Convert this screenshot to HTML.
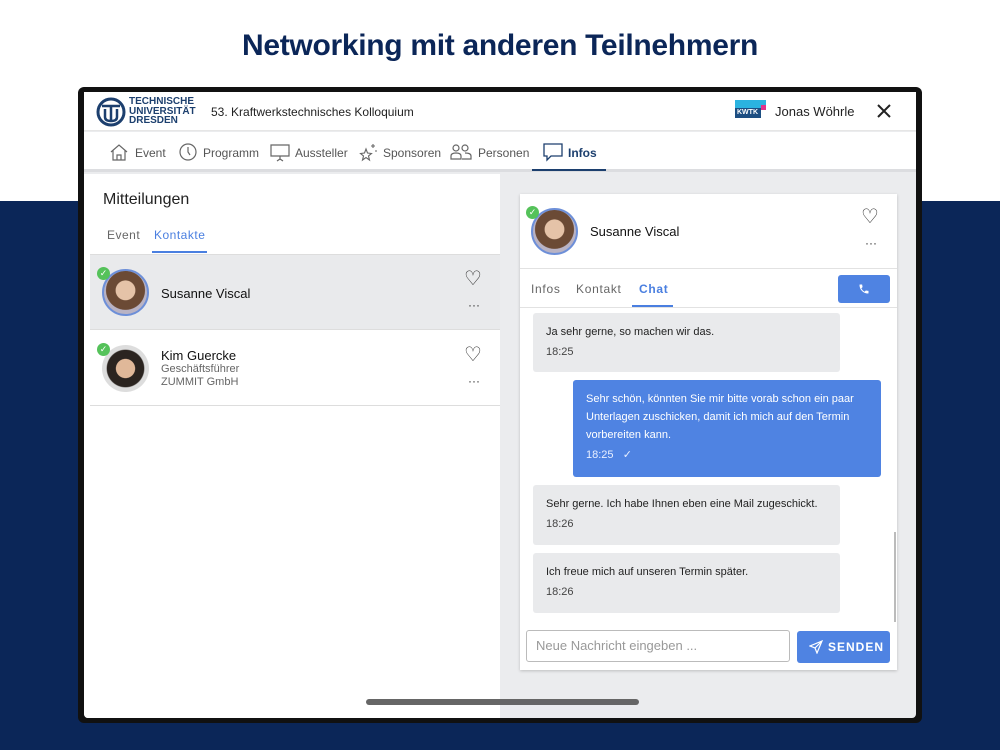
<!DOCTYPE html>
<html><head><meta charset="utf-8"><style>
*{margin:0;padding:0;box-sizing:border-box}
body{width:1000px;height:750px;overflow:hidden;position:relative;background:#fff;font-family:"Liberation Sans",sans-serif}
.a{position:absolute}
.navy{left:0;top:201px;width:1000px;height:549px;background:#0b2658}
h1{position:absolute;left:0;width:1000px;top:29px;text-align:center;font-size:30px;font-weight:bold;color:#0b2658;letter-spacing:-0.3px}
.frame{left:78px;top:87px;width:844px;height:636px;background:#111;border-radius:6px}
.scr{left:84px;top:92px;width:832px;height:626px;background:#ebecee;overflow:hidden;border-radius:0 0 4px 4px}
.bub{background:#e9eaec;border-radius:3px;font-size:11px;color:#222;line-height:18px;padding:10px 13px}
.bub .t{color:#444;margin-top:2px}
</style></head><body>
<h1>Networking mit anderen Teilnehmern</h1>
<div class="a navy"></div>
<div class="a frame"></div>
<div class="a scr">
 <div class="a" style="left:0;top:0;width:832px;height:39px;background:#fff;border-bottom:1px solid #e6e6e6"></div>
 <svg class="a" style="left:12px;top:5px" width="30" height="30" viewBox="0 0 30 30"><circle cx="15" cy="15" r="13" fill="none" stroke="#1c3f6e" stroke-width="3"/><path d="M6 9h18M15 9v16M9 12v8q0 4 6 4q6 0 6-4v-8" fill="none" stroke="#1c3f6e" stroke-width="2.5"/></svg>
 <div class="a" style="left:45px;top:5px;font-size:10px;font-weight:bold;color:#1c3f6e;line-height:9.5px">TECHNISCHE<br>UNIVERSITÄT<br>DRESDEN</div>
 <div class="a" style="left:127px;top:13px;font-size:12px;color:#222">53. Kraftwerkstechnisches Kolloquium</div>
 <div class="a" style="left:651px;top:8px;width:31px;height:22px;background:#fff">
  <div class="a" style="left:0;top:0;width:31px;height:8px;background:#2bb3e0"></div>
  <div class="a" style="left:0;top:8px;width:26px;height:10px;background:#1d4e82;color:#fff;font-size:7px;font-weight:bold;line-height:10px;padding-left:2px">KWTK</div>
  <div class="a" style="left:26px;top:5px;width:5px;height:5px;background:#e0338a"></div>
 </div>
 <div class="a" style="left:691px;top:12px;font-size:13px;color:#222">Jonas Wöhrle</div>
 <svg class="a" style="left:793px;top:12px" width="14" height="14" viewBox="0 0 14 14" stroke="#222" stroke-width="2"><path d="M1 1l12 12M13 1L1 13"/></svg>
 <div class="a" style="left:0;top:40px;width:832px;height:40px;background:#fff;border-bottom:3px solid #dcdde0"></div>
 <svg class="a" style="left:25px;top:51px" width="20" height="18" viewBox="0 0 20 18" fill="none" stroke="#666" stroke-width="1.2"><path d="M2 9L10 2l8 7M4 7v10h12V7M8 17v-5h4v5"/></svg>
 <div class="a" style="left:51px;top:54px;font-size:12px;color:#555">Event</div>
 <svg class="a" style="left:95px;top:51px" width="18" height="18" viewBox="0 0 18 18" fill="none" stroke="#666" stroke-width="1.2"><circle cx="9" cy="9" r="8"/><path d="M9 4v5l2 3"/></svg>
 <div class="a" style="left:119px;top:54px;font-size:12px;color:#555">Programm</div>
 <svg class="a" style="left:186px;top:51px" width="20" height="20" viewBox="0 0 20 20" fill="none" stroke="#666" stroke-width="1.2"><path d="M1 2h18v11H1zM10 13v3M7 18l3-2 3 2"/></svg>
 <div class="a" style="left:211px;top:54px;font-size:12px;color:#555">Aussteller</div>
 <svg class="a" style="left:274px;top:50px" width="20" height="20" viewBox="0 0 20 20" fill="none" stroke="#666" stroke-width="1.1"><path d="M8 7l1.5 4 4 .5-3 2.5 1 4-3.5-2.5L4.5 18l1-4-3-2.5 4-.5z"/><path d="M15 2v4M13 4h4M17 9h2"/></svg>
 <div class="a" style="left:299px;top:54px;font-size:12px;color:#555">Sponsoren</div>
 <svg class="a" style="left:366px;top:52px" width="22" height="16" viewBox="0 0 22 16" fill="none" stroke="#666" stroke-width="1.2"><circle cx="6" cy="4" r="3"/><circle cx="15" cy="4" r="3"/><path d="M1 15v-3q0-3 5-3t5 3v3zM12 15h9v-3q0-3-6-3"/></svg>
 <div class="a" style="left:394px;top:54px;font-size:12px;color:#555">Personen</div>
 <svg class="a" style="left:459px;top:51px" width="20" height="19" viewBox="0 0 20 19" fill="none" stroke="#1c3f6e" stroke-width="1.3"><path d="M1 1h18v12H8l-4 4v-4H1z"/></svg>
 <div class="a" style="left:484px;top:54px;font-size:12px;color:#1c3f6e;font-weight:bold">Infos</div>
 <div class="a" style="left:448px;top:77px;width:74px;height:2px;background:#1c3f6e"></div>
 <div class="a" style="left:0;top:82px;width:416px;height:544px;background:#fff"></div>
 <div class="a" style="left:19px;top:99px;font-size:16px;color:#222">Mitteilungen</div>
 <div class="a" style="left:23px;top:136px;font-size:12px;color:#666;letter-spacing:.5px">Event</div>
 <div class="a" style="left:70px;top:136px;font-size:12px;color:#4a7fe0;letter-spacing:.5px">Kontakte</div>
 <div class="a" style="left:68px;top:159px;width:55px;height:2px;background:#4a7fe0"></div>
 <div class="a" style="left:6px;top:162px;width:410px;height:1px;background:#ddd"></div>
 <div class="a" style="left:6px;top:163px;width:410px;height:75px;background:#e9eaec;border-bottom:1px solid #ddd"></div>
 <div class="a" style="left:18px;top:177px;width:47px;height:47px;border-radius:50%;background:radial-gradient(circle at 50% 45%,#e5c3a8 0 30%,#6b4a35 32% 60%,#b9b3c4 62%);border:2px solid #6d8fd8"></div>
 <div class="a" style="left:13px;top:175px;width:13px;height:13px;border-radius:50%;background:#55c25a;color:#fff;font-size:9px;text-align:center;line-height:13px">✓</div>
 <div class="a" style="left:77px;top:194px;font-size:13px;color:#111">Susanne Viscal</div>
 <div class="a" style="left:380px;top:174px;font-size:20px;color:#333">♡</div>
 <div class="a" style="left:384px;top:206px;font-size:12px;color:#333">···</div>
 <div class="a" style="left:6px;top:313px;width:410px;height:1px;background:#ddd"></div>
 <div class="a" style="left:18px;top:253px;width:47px;height:47px;border-radius:50%;background:radial-gradient(circle at 50% 50%,#e0b899 0 28%,#2b2420 30% 55%,#ddd 58%)"></div>
 <div class="a" style="left:13px;top:251px;width:13px;height:13px;border-radius:50%;background:#55c25a;color:#fff;font-size:9px;text-align:center;line-height:13px">✓</div>
 <div class="a" style="left:77px;top:256px;font-size:13px;color:#111">Kim Guercke</div>
 <div class="a" style="left:77px;top:271px;font-size:11px;color:#666;line-height:13px">Geschäftsführer<br>ZUMMIT GmbH</div>
 <div class="a" style="left:380px;top:250px;font-size:20px;color:#333">♡</div>
 <div class="a" style="left:384px;top:282px;font-size:12px;color:#333">···</div>
 <div class="a" style="left:436px;top:102px;width:377px;height:476px;background:#fff;box-shadow:0 1px 3px rgba(0,0,0,.2)"></div>
 <div class="a" style="left:447px;top:116px;width:47px;height:47px;border-radius:50%;background:radial-gradient(circle at 50% 45%,#e5c3a8 0 30%,#6b4a35 32% 60%,#b9b3c4 62%);border:2px solid #6d8fd8"></div>
 <div class="a" style="left:442px;top:114px;width:13px;height:13px;border-radius:50%;background:#55c25a;color:#fff;font-size:9px;text-align:center;line-height:13px">✓</div>
 <div class="a" style="left:506px;top:132px;font-size:13px;color:#111">Susanne Viscal</div>
 <div class="a" style="left:777px;top:112px;font-size:20px;color:#333">♡</div>
 <div class="a" style="left:781px;top:144px;font-size:12px;color:#333">···</div>
 <div class="a" style="left:436px;top:176px;width:377px;height:1px;background:#e2e2e2"></div>
 <div class="a" style="left:447px;top:190px;font-size:12px;color:#666;letter-spacing:.7px">Infos</div>
 <div class="a" style="left:492px;top:190px;font-size:12px;color:#666;letter-spacing:.7px">Kontakt</div>
 <div class="a" style="left:555px;top:190px;font-size:12px;color:#4a7fe0;letter-spacing:.7px;font-weight:bold">Chat</div>
 <div class="a" style="left:548px;top:213px;width:41px;height:2px;background:#4a7fe0"></div>
 <div class="a" style="left:754px;top:183px;width:52px;height:28px;background:#4f83e2;border-radius:3px"></div>
 <svg class="a" style="left:774px;top:191px" width="12" height="12" viewBox="0 0 24 24" fill="#fff"><path d="M6.6 10.8a15 15 0 006.6 6.6l2.2-2.2c.3-.3.7-.4 1-.2 1.1.4 2.3.6 3.6.6.6 0 1 .4 1 1V20c0 .6-.4 1-1 1A17 17 0 013 4c0-.6.4-1 1-1h3.5c.6 0 1 .4 1 1 0 1.3.2 2.5.6 3.6.1.3 0 .7-.2 1z"/></svg>
 <div class="a" style="left:436px;top:215px;width:377px;height:1px;background:#e2e2e2"></div>
 <div class="a bub" style="left:449px;top:221px;width:307px;height:59px">Ja sehr gerne, so machen wir das.<div class="t">18:25</div></div>
 <div class="a bub" style="left:489px;top:288px;width:308px;height:97px;background:#4f83e2;color:#fff">Sehr schön, könnten Sie mir bitte vorab schon ein paar Unterlagen zuschicken, damit ich mich auf den Termin vorbereiten kann.<div class="t" style="color:#e8efff">18:25 &nbsp;&nbsp;✓</div></div>
 <div class="a bub" style="left:449px;top:393px;width:307px;height:60px">Sehr gerne. Ich habe Ihnen eben eine Mail zugeschickt.<div class="t">18:26</div></div>
 <div class="a bub" style="left:449px;top:461px;width:307px;height:60px">Ich freue mich auf unseren Termin später.<div class="t">18:26</div></div>
 <div class="a" style="left:810px;top:440px;width:2px;height:90px;background:#bbb"></div>
 <div class="a" style="left:442px;top:538px;width:264px;height:32px;border:1px solid #bbb;border-radius:3px;font-size:13px;color:#999;line-height:30px;padding-left:9px">Neue Nachricht eingeben ...</div>
 <div class="a" style="left:713px;top:539px;width:93px;height:32px;background:#4f83e2;border-radius:3px"></div>
 <svg class="a" style="left:725px;top:548px" width="14" height="14" viewBox="0 0 14 14" fill="none" stroke="#fff" stroke-width="1.2"><path d="M13 1L1 6l5 2 2 5zM13 1L6 8"/></svg>
 <div class="a" style="left:744px;top:548px;font-size:12px;font-weight:bold;letter-spacing:1px;color:#fff">SENDEN</div>
 <div class="a" style="left:282px;top:607px;width:273px;height:6px;background:#666;border-radius:3px"></div>
</div>
</body></html>
